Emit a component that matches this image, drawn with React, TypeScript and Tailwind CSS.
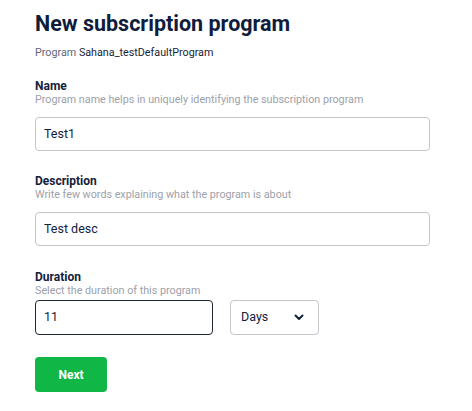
import React from "react";

function Field({
  label,
  helper,
  value,
  className,
}: {
  label: string;
  helper: string;
  value: string;
  className?: string;
}) {
  return (
    <div className={className}>
      <div className="text-[12px] leading-[14px] font-bold text-[#14213d]">{label}</div>
      <div className="text-[10.75px] leading-[14px] text-[#9ca1ab]">{helper}</div>
      <div className="mt-[10px] h-[34px] w-[395px] rounded-[4px] border border-[#c3c5ca] flex items-center pl-[8px] text-[12.5px] text-[#14213d]">
        {value}
      </div>
    </div>
  );
}

export default function App() {
  return (
    <div
      className="w-[472px] h-[411px] bg-white pl-[35px] pt-[10px]"
      style={{ fontFamily: "Roboto, 'Liberation Sans', sans-serif" }}
    >
      <h1 className="text-[21.5px] leading-[28px] font-bold text-[#0f1c3c]">New subscription program</h1>
      <div className="mt-[7px] text-[10.75px] leading-[16px]">
        <span className="text-[#5f6778]">Program </span>
        <span className="text-[#1b2437]">Sahana_testDefaultProgram</span>
      </div>

      <Field
        className="mt-[18px]"
        label="Name"
        helper="Program name helps in uniquely identifying the subscription program"
        value="Test1"
      />
      <Field
        className="mt-[23px]"
        label="Description"
        helper="Write few words explaining what the program is about"
        value="Test desc"
      />

      <div className="mt-[24px]">
        <div className="text-[12px] leading-[14px] font-bold text-[#14213d]">Duration</div>
        <div className="text-[10.75px] leading-[14px] text-[#9ca1ab]">Select the duration of this program</div>
        <div className="mt-[2px] flex gap-[17px]">
          <div className="h-[35px] w-[178px] rounded-[4px] border border-[#1f2633] flex items-center pl-[8px] text-[12.5px] text-[#14213d]">
            11
          </div>
          <div className="h-[35px] w-[89px] rounded-[4px] border border-[#c3c5ca] flex items-center justify-between pl-[10px] pr-[14px] text-[12.5px] text-[#14213d]">
            <span>Days</span>
            <svg width="10" height="7" viewBox="0 0 10 7" fill="none">
              <path d="M1.5 1.5 L5 5 L8.5 1.5" stroke="#14213d" strokeWidth="2" strokeLinecap="round" strokeLinejoin="round" />
            </svg>
          </div>
        </div>
      </div>

      <button className="mt-[22px] h-[35px] w-[72px] rounded-[4px] bg-[#10b747] text-white text-[12px] font-bold">
        Next
      </button>
    </div>
  );
}
